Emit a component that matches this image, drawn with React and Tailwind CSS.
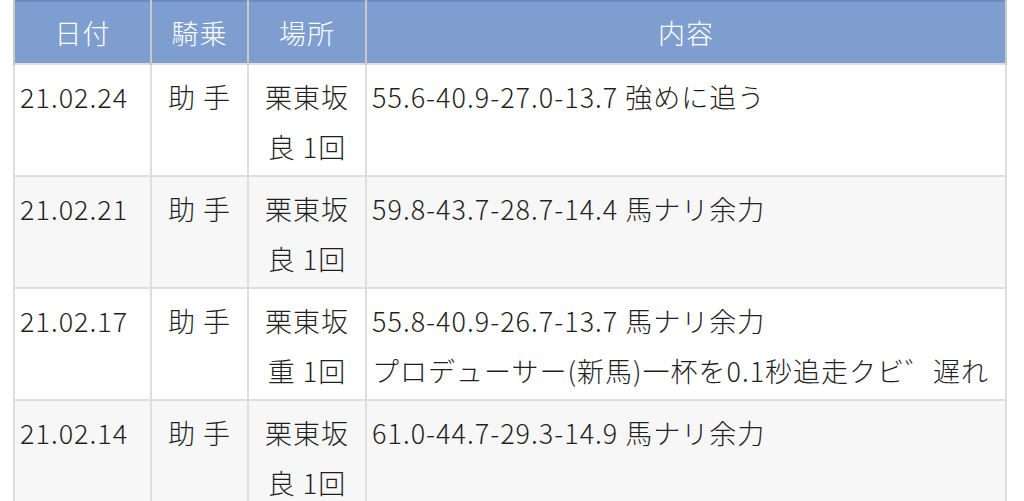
import React from 'react';

const rows = [
    { date: '21.02.24', rider: '助 手', place: ['栗東坂', '良 1回'], body: ['55.6-40.9-27.0-13.7 強めに追う'] },
    { date: '21.02.21', rider: '助 手', place: ['栗東坂', '良 1回'], body: ['59.8-43.7-28.7-14.4 馬ナリ余力'] },
    { date: '21.02.17', rider: '助 手', place: ['栗東坂', '重 1回'], body: ['55.8-40.9-26.7-13.7 馬ナリ余力', 'プロデューサー(新馬)一杯を0.1秒追走クビ゛遅れ'] },
    { date: '21.02.14', rider: '助 手', place: ['栗東坂', '良 1回'], body: ['61.0-44.7-29.3-14.9 馬ナリ余力'] },
];

function App() {
    // Shared cell styling
    const th = "border-x-2 border-[#c9c9c9] font-light text-white text-center py-[6px] leading-[49px]";
    const td = "border-2 border-[#dedede] align-top pt-[7px] pb-[3px] leading-[50px]";

    return (
        <div className="w-[1024px] h-[501px] overflow-hidden bg-white pl-[13px] pr-[17px]" style={{ fontFamily: '"Noto Sans CJK JP", "Noto Sans", sans-serif' }}>
            <table className="w-full border-collapse table-fixed text-[27px] font-light tracking-[1px] text-[#1f1f1f]">
                <colgroup>
                    <col className="w-[137px]" />
                    <col className="w-[97px]" />
                    <col className="w-[118px]" />
                    <col />
                </colgroup>
                <thead>
                    <tr className="bg-[#7e9ecf] border-t-2 border-t-[#6d8cc0] border-b-2 border-b-[#9a9a9a]">
                        <th className={th}>日付</th>
                        <th className={th}>騎乗</th>
                        <th className={th}>場所</th>
                        <th className={th}>内容</th>
                    </tr>
                </thead>
                <tbody>
                    {rows.map((r, i) => (
                        <tr key={r.date} className={i % 2 === 1 ? "bg-[#f7f7f7]" : "bg-white"}>
                            <td className={`${td} pl-[5px]`}>{r.date}</td>
                            <td className={`${td} text-center`}>{r.rider}</td>
                            <td className={`${td} text-center`}>
                                {r.place.map((p) => <div key={p}>{p}</div>)}
                            </td>
                            <td className={`${td} pl-[5px] whitespace-nowrap`}>
                                {r.body.map((b) => <div key={b}>{b}</div>)}
                            </td>
                        </tr>
                    ))}
                </tbody>
            </table>
        </div>
    );
}

export default App;
